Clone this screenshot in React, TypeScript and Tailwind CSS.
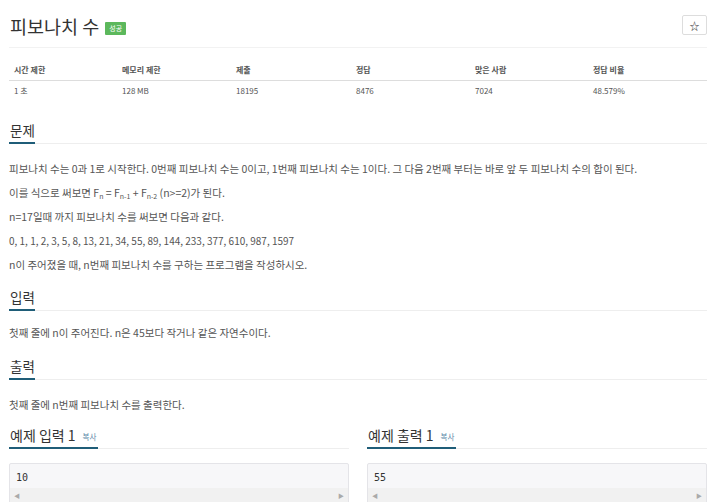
import React from "react";

const font = { fontFamily: '"Noto Sans CJK KR", "Open Sans", sans-serif' };

function Heading({ children }: { children: React.ReactNode }) {
  return (
    <div className="border-b border-[#eeeeee] h-[25px] flex">
      <div className="border-b-2 border-[#1f5d78] -mb-px flex items-end pb-[3px] pl-px text-[13.5px] leading-[18px] text-[#333]">
        {children}
      </div>
    </div>
  );
}

function SampleHeading({ title }: { title: string }) {
  return (
    <div className="border-b border-[#eeeeee] h-[25px] flex">
      <div className="border-b-2 border-[#1f5d78] -mb-px flex items-end pb-[3px] pl-px pr-[2px] text-[14px] leading-[18px] text-[#333] gap-[7px]">
        <span>{title}</span>
        <span className="text-[7.5px] text-[#5a87a8] leading-[12px] pb-[1px]">복사</span>
      </div>
    </div>
  );
}

function CodeBox({ value }: { value: string }) {
  return (
    <div className="mt-[14px] h-[44px] bg-[#f7f7f9] border border-[#e4e4e8] rounded-[2px] flex flex-col">
      <div className="h-[24px] flex items-center pt-[4px] pl-[6px] text-[10px] text-[#333] leading-[14px]" style={{ fontFamily: '"DejaVu Sans Mono", monospace' }}>
        {value}
      </div>
      <div className="flex-1 bg-[#f1f1f1] flex items-center justify-between px-[4px] pb-[3px] text-[6px] text-[#aaa]">
        <span>◀</span>
        <span>▶</span>
      </div>
    </div>
  );
}

export default function App() {
  const headers = ["시간 제한", "메모리 제한", "제출", "정답", "맞은 사람", "정답 비율"];
  const values = ["1 초", "128 MB", "18195", "8476", "7024", "48.579%"];
  return (
    <div className="w-[720px] h-[502px] overflow-hidden bg-white pl-[9px] pr-[13px]" style={font}>
      <div className="h-[48px] flex items-start justify-between border-b border-[#f2f2f2]">
        <div className="flex items-center pt-[14px] pl-px">
          <span className="text-[18.5px] leading-[24px] text-[#333]">피보나치 수</span>
          <span className="ml-[6px] mt-[4px] bg-[#5cb85c] text-white text-[7px] leading-[13px] px-[4px] rounded-[1px]">성공</span>
        </div>
        <div className="mt-[15px] w-[25px] h-[20px] border border-[#dddddd] rounded-[2px] flex items-center justify-center text-[10px] text-[#333]">
          ☆
        </div>
      </div>

      <div className="mt-[12px] grid grid-cols-[108px_114px_120px_119px_118px_1fr] h-[21px] border-b border-[#dddddd] items-center text-[8px] font-bold text-[#555]">
        {headers.map((h) => (
          <div key={h} className="pl-[5px]">{h}</div>
        ))}
      </div>
      <div className="grid grid-cols-[108px_114px_120px_119px_118px_1fr] h-[20px] items-center text-[8px] text-[#555]">
        {values.map((v) => (
          <div key={v} className="pl-[5px]">{v}</div>
        ))}
      </div>

      <div className="mt-[18px]">
        <Heading>문제</Heading>
      </div>
      <div className="mt-[13px] text-[10.5px] leading-[24px] text-[#555]">
        <p>피보나치 수는 0과 1로 시작한다. 0번째 피보나치 수는 0이고, 1번째 피보나치 수는 1이다. 그 다음 2번째 부터는 바로 앞 두 피보나치 수의 합이 된다.</p>
        <p>
          이를 식으로 써보면 F<sub className="text-[7px]">n</sub> = F<sub className="text-[7px]">n-1</sub> + F<sub className="text-[7px]">n-2</sub> (n&gt;=2)가 된다.
        </p>
        <p>n=17일때 까지 피보나치 수를 써보면 다음과 같다.</p>
        <p className="text-[10px]">0, 1, 1, 2, 3, 5, 8, 13, 21, 34, 55, 89, 144, 233, 377, 610, 987, 1597</p>
        <p>n이 주어졌을 때, n번째 피보나치 수를 구하는 프로그램을 작성하시오.</p>
      </div>

      <div className="mt-[9px]">
        <Heading>입력</Heading>
      </div>
      <p className="mt-[10px] text-[10.5px] leading-[24px] text-[#555]">첫째 줄에 n이 주어진다. n은 45보다 작거나 같은 자연수이다.</p>

      <div className="mt-[10px]">
        <Heading>출력</Heading>
      </div>
      <p className="mt-[13px] text-[10.5px] leading-[24px] text-[#555]">첫째 줄에 n번째 피보나치 수를 출력한다.</p>

      <div className="mt-[7px] grid grid-cols-2 gap-[18px]">
        <div>
          <SampleHeading title="예제 입력 1" />
          <CodeBox value="10" />
        </div>
        <div>
          <SampleHeading title="예제 출력 1" />
          <CodeBox value="55" />
        </div>
      </div>
    </div>
  );
}
